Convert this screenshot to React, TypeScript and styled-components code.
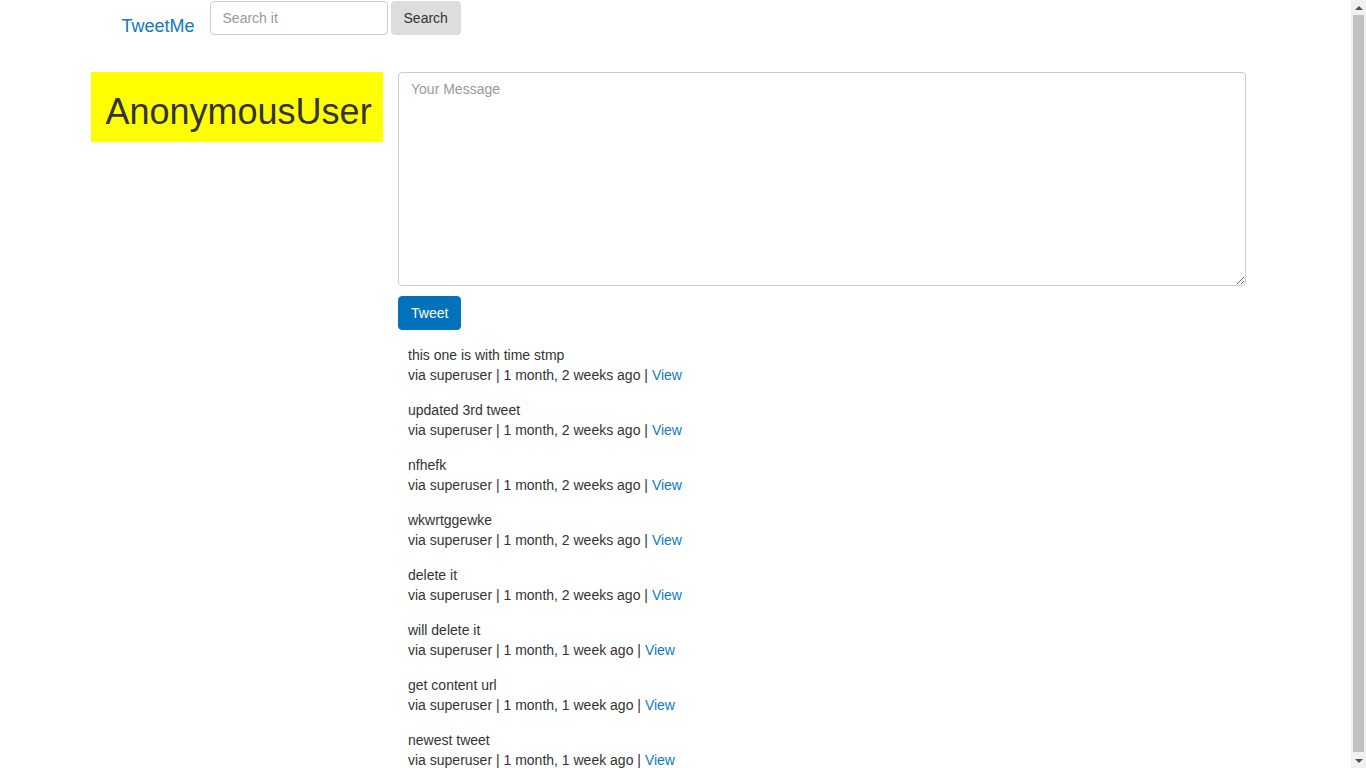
import styled, { createGlobalStyle } from 'styled-components'

const GlobalStyle = createGlobalStyle`
  html, body {
    margin: 0;
    padding: 0;
    background: #fff;
  }
  body {
    font-family: "Liberation Sans", Arial, Helvetica, sans-serif;
    font-size: 14px;
    line-height: 20px;
    color: #333;
  }
  *, *::before, *::after {
    box-sizing: border-box;
  }
`

const Page = styled.div`
  margin-right: 15px;
`

const ScrollTrack = styled.div`
  position: fixed;
  top: 0;
  right: 0;
  width: 15px;
  height: 100vh;
  display: flex;
  flex-direction: column;
  background: #f1f1f1;
`

const ScrollArrow = styled.div<{ $down?: boolean }>`
  flex: 0 0 15px;
  display: flex;
  align-items: center;
  justify-content: center;

  &::after {
    content: '';
    width: 0;
    height: 0;
    border-left: 4px solid transparent;
    border-right: 4px solid transparent;
    ${({ $down }) => ($down ? 'border-top: 4px solid #505050;' : 'border-bottom: 4px solid #505050;')}
  }
`

const ScrollThumb = styled.div`
  flex: 1;
  margin: 0 2px 1px;
  background: #c1c1c1;
`

const Container = styled.div`
  max-width: 1170px;
  margin: 0 auto;
  padding: 0 15px;
`

const Navbar = styled.nav`
  display: flex;
  align-items: flex-start;
  padding: 1px 16px 0;
`

const Brand = styled.a`
  font-size: 18px;
  line-height: 20px;
  padding-top: 15px;
  margin-right: 15px;
  color: #1079c5;
  text-decoration: none;
`

const SearchForm = styled.form`
  display: flex;
  gap: 3px;
`

const SearchInput = styled.input`
  width: 178px;
  height: 34px;
  padding: 6px 12px;
  font: inherit;
  color: #555;
  border: 1px solid #ccc;
  border-radius: 4px;
  outline: none;

  &::placeholder {
    color: #999;
  }
`

const Button = styled.button<{ $primary?: boolean }>`
  height: 34px;
  padding: 6px 12px;
  font: inherit;
  border-radius: 4px;
  border: 1px solid ${({ $primary }) => ($primary ? '#0372bc' : '#ddd')};
  background: ${({ $primary }) => ($primary ? '#0372bc' : '#ddd')};
  color: ${({ $primary }) => ($primary ? '#fff' : '#333')};
  cursor: pointer;
`

const Row = styled.div`
  display: flex;
  margin: 36px -15px 0;
`

const ProfileCol = styled.div`
  flex: 0 0 25%;
  min-width: 0;
  align-self: flex-start;
  padding: 0 15px;
  background: yellow;
`

const UserName = styled.h1`
  margin: 20px 0 10px;
  font-size: 36px;
  line-height: 1.1;
  font-weight: 500;
  white-space: nowrap;
  color: #333;
`

const MainCol = styled.div`
  flex: 0 0 75%;
  min-width: 0;
  padding: 0 15px;
`

const MessageBox = styled.textarea`
  display: block;
  width: 100%;
  height: 214px;
  padding: 6px 12px;
  font: inherit;
  color: #555;
  border: 1px solid #ccc;
  border-radius: 4px;
  outline: none;

  &::placeholder {
    color: #999;
  }
`

const TweetForm = styled.form`
  display: flex;
  flex-direction: column;
  align-items: flex-start;
  gap: 10px;
`

const TweetList = styled.div`
  margin-top: 15px;
`

const TweetItem = styled.div`
  padding-left: 10px;
  margin-bottom: 15px;
`

const ViewLink = styled.a`
  color: #1079c5;
  text-decoration: none;
`

const tweets = [
  { content: 'this one is with time stmp', since: '1 month, 2 weeks ago' },
  { content: 'updated 3rd tweet', since: '1 month, 2 weeks ago' },
  { content: 'nfhefk', since: '1 month, 2 weeks ago' },
  { content: 'wkwrtggewke', since: '1 month, 2 weeks ago' },
  { content: 'delete it', since: '1 month, 2 weeks ago' },
  { content: 'will delete it', since: '1 month, 1 week ago' },
  { content: 'get content url', since: '1 month, 1 week ago' },
  { content: 'newest tweet', since: '1 month, 1 week ago' },
]

const App = () => {
  return (
    <>
      <GlobalStyle />
      <Page>
        <Container>
          <Navbar>
            <Brand href="#">TweetMe</Brand>
            <SearchForm onSubmit={(e) => e.preventDefault()}>
              <SearchInput type="text" placeholder="Search it" />
              <Button type="submit">Search</Button>
            </SearchForm>
          </Navbar>

          <Row>
            <ProfileCol>
              <UserName>AnonymousUser</UserName>
            </ProfileCol>
            <MainCol>
              <TweetForm onSubmit={(e) => e.preventDefault()}>
                <MessageBox placeholder="Your Message" />
                <Button $primary type="submit">
                  Tweet
                </Button>
              </TweetForm>

              <TweetList>
                {tweets.map((tweet, i) => (
                  <TweetItem key={i}>
                    <div>{tweet.content}</div>
                    <div>
                      via superuser | {tweet.since} | <ViewLink href="#">View</ViewLink>
                    </div>
                  </TweetItem>
                ))}
              </TweetList>
            </MainCol>
          </Row>
        </Container>
      </Page>
      <ScrollTrack aria-hidden="true">
        <ScrollArrow />
        <ScrollThumb />
        <ScrollArrow $down />
      </ScrollTrack>
    </>
  )
}

export default App
